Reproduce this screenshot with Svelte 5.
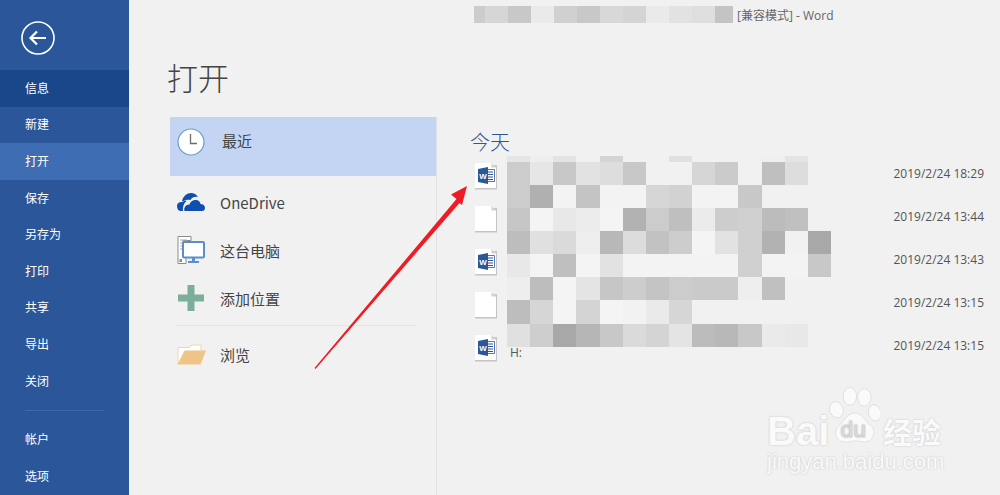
<script>
    const nav = [
        { label: "信息", cls: "info" },
        { label: "新建" },
        { label: "打开", cls: "current" },
        { label: "保存" },
        { label: "另存为" },
        { label: "打印" },
        { label: "共享" },
        { label: "导出" },
        { label: "关闭" },
    ];

    const titleBlur = [
        [11, "cc"], [23, "d6"], [23, "c8"], [23, "ea"], [23, "d0"], [23, "c8"],
        [23, "d8"], [23, "d4"], [23, "ea"], [23, "e2"], [23, "de"], [18, "c4"],
    ];

    // pixelated file names, one string of grey values per row
    const blurRows = [
        { h: 6, cells: "e5 ee e3 f1 d4 f1 f1 e0 f1 f1 f1 ef e4 f1" },
        { h: 23, cells: "cc e6 c8 e2 dd c8 f1 f1 d6 cb f1 bf dd f1" },
        { h: 23, cells: "cc b0 f3 c4 f3 f3 d6 d2 f3 f3 c8 f1 f1 f1" },
        { h: 23, cells: "c6 f4 e8 ec f4 b2 cc bf eb cd d0 bc c0 f1" },
        { h: 23, cells: "bd e0 da ee b8 dc c2 cd f4 e2 d0 b2 f1 a8" },
        { h: 23, cells: "e8 f4 bf f4 e2 f3 f3 f3 f3 f3 d0 f3 f3 c8" },
        { h: 23, cells: "ee bd f4 e4 c6 cd c4 cc ca ca ee c0 f1 f1" },
        { h: 24, cells: "bd d6 f4 d4 f4 f2 ea d6 f1 f1 f1 f1 f1 f1" },
        { h: 23, cells: "e0 ce a8 b6 c8 da d4 e4 bc b8 c8 ea e8 f1" },
    ];

    const files = [
        { word: true, date: "2019/2/24 18:29" },
        { word: false, date: "2019/2/24 13:44" },
        { word: true, date: "2019/2/24 13:43" },
        { word: false, date: "2019/2/24 13:15" },
        { word: true, date: "2019/2/24 13:15" },
    ];
</script>

<div class="app">
    <aside class="sidebar">
        <div class="back">
            <svg width="34" height="34" viewBox="0 0 34 34" fill="none" stroke="#fff">
                <circle cx="17" cy="17" r="16" stroke-width="1.6" />
                <path d="M9.5 17H25M16 10.5L9.5 17l6.500 6.500" stroke-width="2.2" />
            </svg>
        </div>
        <nav>
            {#each nav as item}
                <div class="nav-item {item.cls ?? ''}">{item.label}</div>
            {/each}
            <div class="nav-rule"></div>
            <div class="nav-item">帐户</div>
            <div class="nav-item">选项</div>
        </nav>
    </aside>

    <main class="main">
        <div class="titlebar">
            <div class="title-blur">
                {#each titleBlur as [w, c]}
                    <span style="width:{w}px;background:#{c}{c}{c}"></span>
                {/each}
            </div>
            <span class="title-text">[兼容模式] - Word</span>
        </div>

        <h1>打开</h1>

        <div class="columns">
            <div class="places">
                <div class="place recent">
                    <svg width="28" height="28" viewBox="0 0 28 28">
                        <circle cx="14" cy="14" r="13" fill="#fff" stroke="#6f9bcb" stroke-width="1.2" />
                        <path d="M13.500 6v9.500H20" fill="none" stroke="#6d6d6d" stroke-width="1.3" />
                    </svg>
                    <span>最近</span>
                </div>
                <div class="place onedrive">
                    <svg width="30" height="20" viewBox="0 0 30 20">
                        <path fill="#0f4fb0" d="M6 9.500C7 4 11 1 15 1c3 0 5.500 1.500 7 4-3-.8-6 .3-7.500 3-2.500-.5-6 .2-7.500 1.500zM1 14c0-3 2.500-4.500 6-4 1-1 2-1.500 3.500-1-2 1.500-4 5-3.500 10H5c-2.500 0-4-2-4-5z" />
                        <path fill="#0f4fb0" d="M8.500 19c-1-3 1-6.500 5-6.500 1-3.500 4-5 7-4.500 2.500.5 3.500 2 4 4 2.500 0 4.500 1.500 4.500 4 0 2-1.200 3-3 3z" />
                    </svg>
                    <span>OneDrive</span>
                </div>
                <div class="place pc">
                    <svg width="28" height="28" viewBox="0 0 28 28">
                        <path fill="#fff" stroke="#8c8c8c" d="M1 .5h13v4H6v15h3v8H1z" />
                        <path stroke="#aaa" d="M3 4h7M3 7h3M3 10h3M3 13h3" />
                        <rect x="2.500" y="23" width="2.500" height="3" fill="#8c8c8c" />
                        <rect x="6" y="6" width="21" height="15.500" rx="1" fill="#fff" stroke="#5a8fc7" stroke-width="2" />
                        <path fill="#5a8fc7" d="M15 22h3v3h4v2H11v-2h4z" />
                    </svg>
                    <span>这台电脑</span>
                </div>
                <div class="place add">
                    <svg width="26" height="26" viewBox="0 0 26 26">
                        <path fill="#7caf9a" d="M9.500 0h7v9.500H26v7h-9.500V26h-7v-9.500H0v-7h9.500z" />
                    </svg>
                    <span>添加位置</span>
                </div>
                <div class="place-rule"></div>
                <div class="place browse">
                    <svg width="29" height="21" viewBox="0 0 29 21">
                        <path fill="#fff" stroke="#f0d6a6" d="M1 20V3.500h11l3-2.500h9v5" />
                        <path fill="#eec586" d="M7.500 6.500H29L23.500 20.500H.5z" />
                    </svg>
                    <span>浏览</span>
                </div>
            </div>

            <section class="recent-list">
                <h2>今天</h2>
                <div class="files">
                    {#each files as file}
                        <div class="file">
                            <svg class="doc" width="24" height="28" viewBox="0 0 24 28">
                                <path fill="#c4c4c4" d="M1 3h22v24.500H1z" />
                                <path fill="#fff" d="M1 1h16.500L22 5.500V26H1z" />
                                <path fill="#d0d0d0" d="M17.500 1L22 5.500h-4.500z" />
                                {#if file.word}
                                    <path fill="#fff" stroke="#2b579a" stroke-width=".8" d="M12 7.500h8.500v12H12z" />
                                    <path stroke="#2b579a" d="M14 10h5M14 12.500h5M14 15h5M14 17.500h5" />
                                    <path fill="#2b579a" d="M4 7l10-2v17L4 20z" />
                                    <text x="5.200" y="16.500" class="w">W</text>
                                {/if}
                            </svg>
                            <span class="date">{file.date}</span>
                        </div>
                    {/each}
                    <span class="path">H:</span>
                    <div class="blur">
                        {#each blurRows as row}
                            <div class="blur-row" style="height:{row.h}px">
                                {#each row.cells.split(" ") as c}
                                    <span style="background:#{c}{c}{c}"></span>
                                {/each}
                            </div>
                        {/each}
                    </div>
                </div>
            </section>
        </div>
    </main>

    <svg class="arrow" width="170" height="195" viewBox="310 180 170 195">
        <path fill="#ee1c25" d="M467 186L451 194.500 456.500 199 314.500 368 315.500 369 459.500 203 462 205z" />
    </svg>

    <div class="watermark">
        <div class="wm-logo">
            <span class="wm-bai">Bai</span>
            <svg width="52" height="58" viewBox="0 0 50 56" fill="#fafafa" stroke="#dcdcdc" stroke-width=".8">
                <ellipse cx="8" cy="22" rx="6.500" ry="8" transform="rotate(-20 8 22)" />
                <ellipse cx="21" cy="9" rx="6.500" ry="8.500" />
                <ellipse cx="35" cy="10" rx="6.500" ry="8.500" />
                <ellipse cx="45" cy="25" rx="6" ry="8" transform="rotate(-15 45 25)" />
                <path d="M26 25c7 0 9 8 15 12 6 5 3 16-6 16-4 0-6-1-9-1s-6 2-11 1c-8-1-10-10-5-15 5-4 8-13 16-13z" />
                <text x="12" y="48" class="wm-du">du</text>
            </svg>
            <span class="wm-cn">经验</span>
        </div>
        <div class="wm-url">jingyan.baidu.com</div>
    </div>
</div>

<style>
    :global(body) {
        margin: 0;
        background: #f1f1f1;
    }

    .app {
        position: relative;
        display: flex;
        width: 1000px;
        height: 495px;
        overflow: hidden;
        background: #f1f1f1;
        font-family: "Noto Sans CJK SC", "Noto Sans", sans-serif;
    }

    .sidebar {
        flex: none;
        width: 129px;
        background: #2b579a;
        color: #fff;
    }

    .back {
        height: 70px;
        box-sizing: border-box;
        padding: 21px 0 0 21px;
    }

    .back svg {
        display: block;
    }

    .nav-item {
        display: flex;
        align-items: center;
        box-sizing: border-box;
        height: 36.6px;
        padding: 0 0 2px 25px;
        font-size: 12px;
    }

    .info {
        background: #19478a;
    }

    .current {
        background: #3e6db3;
    }

    .nav-rule {
        height: 1px;
        margin: 11px 25px 10px;
        background: #3e6aa9;
    }

    .main {
        flex: 1;
        min-width: 0;
    }

    .titlebar {
        display: flex;
        align-items: center;
        height: 17px;
        padding: 6px 0 0 345px;
    }

    .title-blur {
        display: flex;
        height: 17px;
    }

    .title-text {
        margin-left: 4px;
        color: #666;
        font-size: 12px;
        font-family: "Open Sans", "Noto Sans CJK SC", sans-serif;
    }

    h1 {
        margin: 31px 0 18px 38px;
        height: 45px;
        color: #444;
        font-size: 31px;
        font-weight: 300;
        line-height: 45px;
    }

    .columns {
        display: flex;
        height: 378px;
    }

    .places {
        flex: none;
        width: 266px;
        margin-left: 41px;
    }

    .place {
        display: flex;
        align-items: center;
        gap: 16px;
        height: 48px;
        padding-left: 7px;
        color: #444;
        font-size: 15px;
    }

    .place svg {
        flex: none;
    }

    .recent {
        height: 50px;
        padding-bottom: 9px;
        gap: 17px;
        background: #c3d5f2;
    }

    .recent span {
        margin-bottom: 3px;
    }

    .onedrive {
        padding-left: 6px;
        gap: 14px;
        margin-top: 2px;
    }

    .pc {
        gap: 15px;
    }

    .add {
        padding-left: 8px;
    }

    .browse {
        margin-top: 4px;
        gap: 14px;
    }

    .place-rule {
        height: 1px;
        margin: 3px 21px 0 6px;
        background: #e4e4e4;
    }

    .recent-list {
        flex: 1;
        min-width: 0;
        border-left: 1px solid #e1e1e1;
        padding-left: 33px;
    }

    h2 {
        margin: 11px 0 0;
        height: 24px;
        color: #2b579a;
        font-size: 20px;
        font-weight: 300;
        line-height: 28px;
    }

    .files {
        position: relative;
    }

    .file {
        display: flex;
        align-items: center;
        justify-content: space-between;
        height: 43px;
        padding-right: 16px;
    }

    .doc {
        display: block;
        flex: none;
        margin: 5px 0 0 4px;
    }

    .w {
        fill: #fff;
        font-size: 8px;
        font-weight: 700;
        font-family: "Liberation Sans", sans-serif;
    }

    .date {
        color: #555;
        font-size: 12px;
        font-family: "Open Sans", sans-serif;
    }

    .path {
        position: absolute;
        left: 40px;
        top: 192px;
        color: #555;
        font-size: 12px;
        font-family: "Open Sans", sans-serif;
    }

    /* mosaic laid over the file names */
    .blur {
        position: absolute;
        left: 37px;
        top: 4px;
    }

    .blur-row {
        display: flex;
    }

    .blur-row span {
        width: 23.15px;
    }

    .arrow {
        position: absolute;
        left: 310px;
        top: 180px;
    }

    .watermark {
        position: absolute;
        left: 767px;
        top: 387px;
        width: 190px;
        color: #fafafa;
        text-shadow: 0 0 2px #bdbdbd;
    }

    .wm-logo {
        display: flex;
        align-items: flex-end;
        height: 58px;
        font-family: "Liberation Sans", sans-serif;
    }

    .wm-bai {
        width: 61px;
        margin-bottom: -8px;
        font-size: 40px;
        font-weight: 700;
        line-height: 44px;
    }

    .wm-logo svg {
        flex: none;
    }

    .wm-du {
        fill: #e8e8e8;
        stroke: #cfcfcf;
        stroke-width: .5;
        font-size: 22px;
        font-family: "Liberation Sans", sans-serif;
    }

    .wm-cn {
        margin: 0 0 -6px 3px;
        font-family: "Noto Sans CJK SC", sans-serif;
        font-size: 29px;
        font-weight: 700;
        line-height: 40px;
    }

    .wm-url {
        margin-top: 5px;
        font-family: "Liberation Sans", sans-serif;
        font-size: 22px;
        line-height: 24px;
        white-space: nowrap;
    }
</style>
